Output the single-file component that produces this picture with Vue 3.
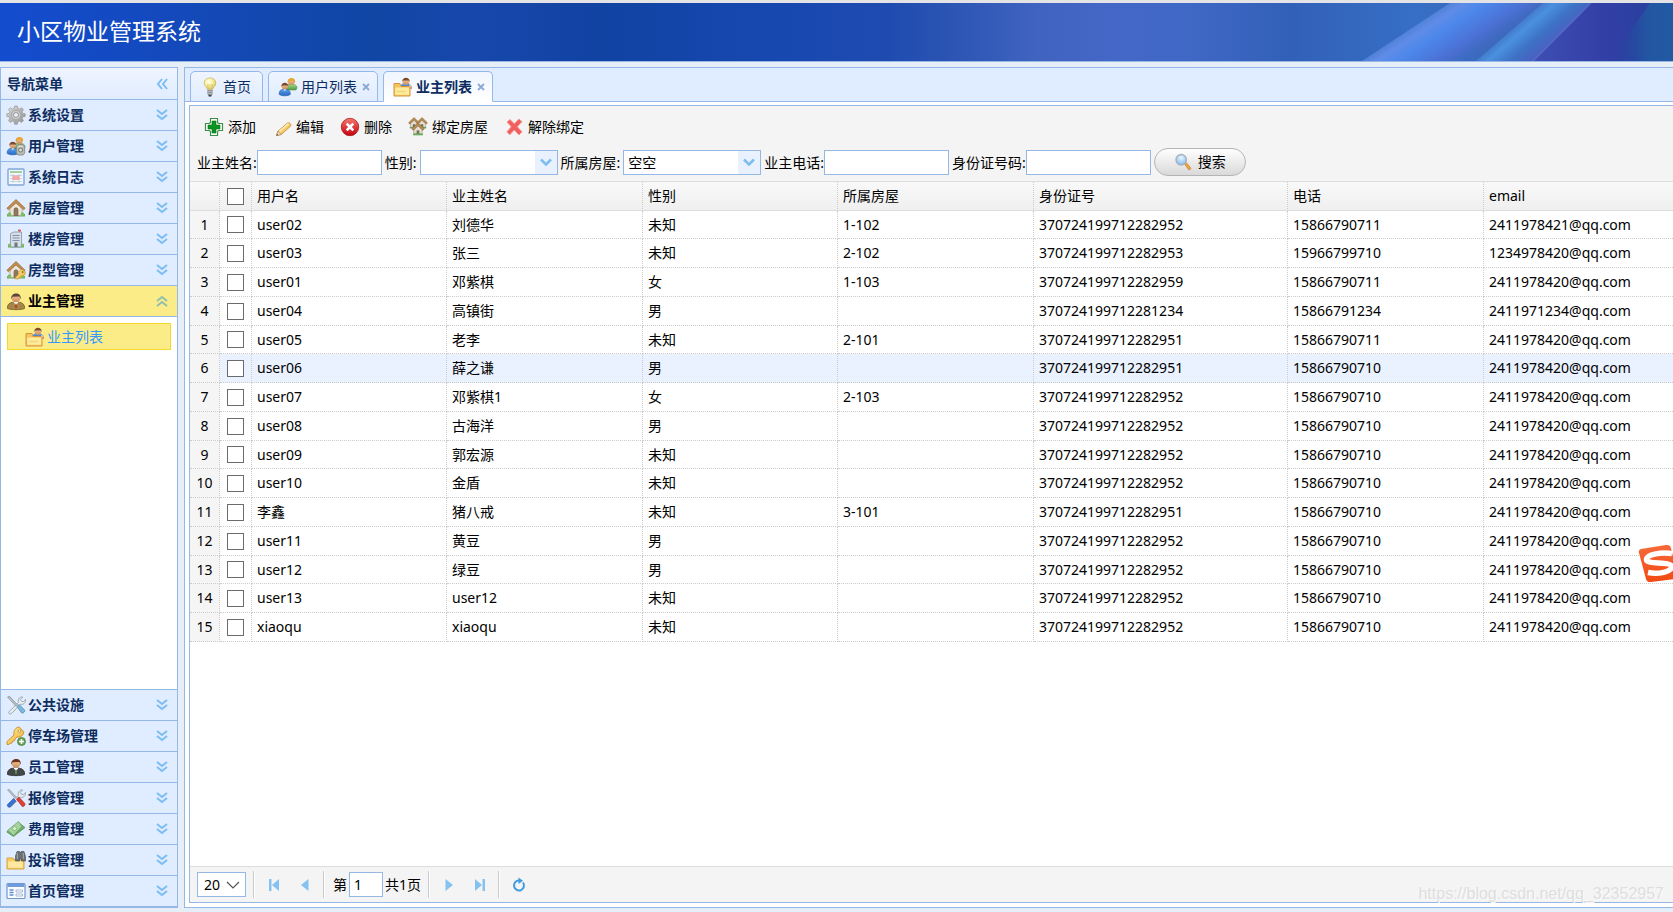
<script setup>
import { ref } from 'vue'

const topMenus = [
  { label: '系统设置', icon: 'gear' },
  { label: '用户管理', icon: 'users-gear' },
  { label: '系统日志', icon: 'log' },
  { label: '房屋管理', icon: 'house' },
  { label: '楼房管理', icon: 'building' },
  { label: '房型管理', icon: 'house-key' }
]
const bottomMenus = [
  { label: '公共设施', icon: 'tools' },
  { label: '停车场管理', icon: 'key' },
  { label: '员工管理', icon: 'staff' },
  { label: '报修管理', icon: 'repair' },
  { label: '费用管理', icon: 'money' },
  { label: '投诉管理', icon: 'folder-search' },
  { label: '首页管理', icon: 'page' }
]
const tabs = [
  { label: '首页', icon: 'bulb', closable: false },
  { label: '用户列表', icon: 'users', closable: true },
  { label: '业主列表', icon: 'folder-user', closable: true }
]
const activeTab = ref('业主列表')
const actions = [
  { label: '添加', icon: 'add' },
  { label: '编辑', icon: 'pencil' },
  { label: '删除', icon: 'delete' },
  { label: '绑定房屋', icon: 'houses' },
  { label: '解除绑定', icon: 'cross' }
]
const columns = ['用户名', '业主姓名', '性别', '所属房屋', '身份证号', '电话', 'email']
const rows = [
  ['user02', '刘德华', '未知', '1-102', '370724199712282952', '15866790711', '2411978421@qq.com'],
  ['user03', '张三', '未知', '2-102', '370724199712282953', '15966799710', '1234978420@qq.com'],
  ['user01', '邓紫棋', '女', '1-103', '370724199712282959', '15866790711', '2411978420@qq.com'],
  ['user04', '高镇街', '男', '', '370724199712281234', '15866791234', '2411971234@qq.com'],
  ['user05', '老李', '未知', '2-101', '370724199712282951', '15866790711', '2411978420@qq.com'],
  ['user06', '薛之谦', '男', '', '370724199712282951', '15866790710', '2411978420@qq.com'],
  ['user07', '邓紫棋1', '女', '2-103', '370724199712282952', '15866790710', '2411978420@qq.com'],
  ['user08', '古海洋', '男', '', '370724199712282952', '15866790710', '2411978420@qq.com'],
  ['user09', '郭宏源', '未知', '', '370724199712282952', '15866790710', '2411978420@qq.com'],
  ['user10', '金盾', '未知', '', '370724199712282952', '15866790710', '2411978420@qq.com'],
  ['李鑫', '猪八戒', '未知', '3-101', '370724199712282951', '15866790710', '2411978420@qq.com'],
  ['user11', '黄豆', '男', '', '370724199712282952', '15866790710', '2411978420@qq.com'],
  ['user12', '绿豆', '男', '', '370724199712282952', '15866790710', '2411978420@qq.com'],
  ['user13', 'user12', '未知', '', '370724199712282952', '15866790710', '2411978420@qq.com'],
  ['xiaoqu', 'xiaoqu', '未知', '', '370724199712282952', '15866790710', '2411978420@qq.com']
]
const name = ref('')
const sex = ref('')
const room = ref('空空')
const phone = ref('')
const idCard = ref('')
const pageSize = ref('20')
const page = ref('1')
</script>

<template>
  <div class="app">
    <svg class="sprite" aria-hidden="true">
      <defs>
        <linearGradient id="g-skin" x1="0" y1="0" x2="0" y2="1"><stop offset="0" stop-color="#f6cfa4" /><stop offset="1" stop-color="#cf8c5c" /></linearGradient>
        <linearGradient id="g-blue" x1="0" y1="0" x2="0" y2="1"><stop offset="0" stop-color="#5fa4ea" /><stop offset="1" stop-color="#2766c4" /></linearGradient>
        <linearGradient id="g-green" x1="0" y1="0" x2="0" y2="1"><stop offset="0" stop-color="#a7d98c" /><stop offset="1" stop-color="#4f9a42" /></linearGradient>
        <linearGradient id="g-gray" x1="0" y1="0" x2="1" y2="1"><stop offset="0" stop-color="#dedede" /><stop offset="1" stop-color="#8f8f8f" /></linearGradient>
        <linearGradient id="g-gold" x1="0" y1="0" x2="1" y2="1"><stop offset="0" stop-color="#fff0a0" /><stop offset="1" stop-color="#e8a92c" /></linearGradient>
        <linearGradient id="g-red" x1="0" y1="0" x2="0" y2="1"><stop offset="0" stop-color="#f47a70" /><stop offset="1" stop-color="#c60010" /></linearGradient>
        <radialGradient id="g-bulb" cx=".4" cy=".35" r=".7"><stop offset="0" stop-color="#fffff0" /><stop offset=".5" stop-color="#f8f0a0" /><stop offset="1" stop-color="#cdbd5a" /></radialGradient>
        <radialGradient id="g-lens" cx=".5" cy=".3" r=".7"><stop offset="0" stop-color="#e8f6ff" /><stop offset="1" stop-color="#83bdf2" /></radialGradient>
      </defs>

      <symbol id="i-gear" viewBox="0 0 20 20">
        <path d="M8.6 1h2.8l.4 2.4 1.7.7 2-1.4 2 2-1.4 2 .7 1.7 2.400.4v2.600l-2.400.5-.7 1.600 1.400 2.100-2 1.900-2-1.400-1.700.7-.4 2.400H8.600l-.4-2.400-1.700-.7-2 1.400-2-1.900 1.400-2.100-.7-1.600-2.400-.5V8.800l2.400-.4.7-1.700-1.400-2 2-2 2 1.400 1.700-.7z" fill="url(#g-gray)" stroke="#989898" stroke-width=".7" />
        <circle cx="10" cy="10" r="4.800" fill="#c9c9c9" stroke="#a5a5a5" />
        <circle cx="10" cy="10" r="2.400" fill="#eef4ff" stroke="#969696" />
      </symbol>

      <symbol id="i-user-back" viewBox="0 0 20 20">
        <path d="M8 11c0-3 2-4 5-4s6 1 6 4l-1 2H9z" fill="url(#g-green)" stroke="#5b9850" stroke-width=".6" />
        <circle cx="13.300" cy="4.600" r="3.400" fill="url(#g-skin)" />
        <path d="M9.600 5c-.6-5 7.800-5.600 7.600-.3l-.7 1.300c-.4-2-2-2.200-3.400-2.200S10.200 4.400 10.200 6z" fill="#e5a72d" />
      </symbol>
      <symbol id="i-user-front" viewBox="0 0 20 20">
        <path d="M1.200 17.500c-.4-4 2.300-5.500 5.500-5.500s6 1.500 5.600 5.500c-2 1.800-9 1.800-11.100 0z" fill="url(#g-blue)" stroke="#2a62b0" stroke-width=".6" />
        <path d="M5.500 12.300h2.600l-1.300 2z" fill="#fff" />
        <circle cx="6.800" cy="9.300" r="3.100" fill="url(#g-skin)" />
        <path d="M3.400 9.700c-.7-5 7.300-5.200 6.900-.1L9.500 8.400H4.700z" fill="#7b4b2c" />
      </symbol>
      <symbol id="i-users" viewBox="0 0 20 20">
        <use href="#i-user-back" /><use href="#i-user-front" />
      </symbol>
      <symbol id="i-users-gear" viewBox="0 0 20 20">
        <use href="#i-user-back" /><use href="#i-user-front" />
        <path d="M12 8.500h5l1.700 2V17l-1.700 2h-5l-1.500-2v-6.500z" fill="#b9bbb4" stroke="#85877f" stroke-width=".8" />
        <circle cx="14.600" cy="14" r="2" fill="#dcdcd6" stroke="#777a70" />
        <path d="M12.500 10.500h4" stroke="#e6e6e0" />
      </symbol>

      <symbol id="i-log" viewBox="0 0 20 20">
        <rect x="2" y="2" width="16" height="16" rx="1" fill="#f2f7fd" stroke="#7fa6d8" stroke-width="1.400" />
        <rect x="4" y="4" width="12" height="2" fill="#a5d0a0" />
        <path d="M4 8.500h12M4 11.500h12M4 14.500h12M7 7v9M13 7v9" stroke="#b7c9df" stroke-width=".8" />
        <path d="M6.500 8.500h7v4.500h-7z" fill="#f4a09a" opacity=".85" />
      </symbol>

      <symbol id="i-house" viewBox="0 0 20 20">
        <path d="M1 16h18v2.500H1z" fill="#6fb257" />
        <path d="M4 9l6-5.500L16 9v8.500H4z" fill="#ece6da" stroke="#a69a86" stroke-width=".7" />
        <path d="M10 1.500L.8 10.300l1.600 1.500L10 5l7.600 6.800 1.600-1.500z" fill="#c08d4c" stroke="#8d6231" stroke-width=".6" />
        <path d="M8 17.500V12c0-1.400.8-2.200 2-2.200s2 .8 2 2.200v5.500z" fill="#8f7a60" stroke="#6b5843" stroke-width=".6" />
        <circle cx="3.500" cy="16" r="1.800" fill="#7fc061" /><circle cx="16.500" cy="16" r="1.800" fill="#7fc061" />
      </symbol>
      <symbol id="i-house-key" viewBox="0 0 20 20">
        <use href="#i-house" />
        <path d="M8.500 18.500l4.200-4.600c-.6-2.300 1-4.200 3-4.200s3.600 1.400 3.600 3.300-2 3.500-4 3L12.500 19z" fill="url(#g-gold)" stroke="#c9952f" stroke-width=".7" />
        <circle cx="16.600" cy="12" r=".9" fill="#8f6a20" />
      </symbol>
      <symbol id="i-building" viewBox="0 0 20 20">
        <path d="M2 16h16v2.500H2z" fill="#6fb257" />
        <path d="M4.500 4.500L8 3h7.500v15h-11z" fill="#d8dee6" stroke="#8493a6" stroke-width=".8" />
        <path d="M6.500 6.500h7M6.500 9h7M6.500 11.500h7" stroke="#7c91ad" stroke-width="1" />
        <path d="M8.500 13.500h3V18h-3z" fill="#6c7885" />
        <path d="M13.500 3V.8" stroke="#999" /><path d="M12 .6h3v1.800h-3z" fill="#d95d5d" />
        <circle cx="3.400" cy="16" r="1.500" fill="#7fc061" /><circle cx="16.700" cy="16" r="1.500" fill="#7fc061" />
      </symbol>

      <symbol id="i-owner" viewBox="0 0 20 20">
        <path d="M1.500 17.500C1 13 4 11 10 11s9 2 8.500 6.500c-3 1.500-14 1.500-17 0z" fill="#a58746" stroke="#735b2a" stroke-width=".8" />
        <path d="M7.500 11l2.500 3 2.500-3z" fill="#fff" /><path d="M10 12l1.200 4L10 17.500 8.800 16z" fill="#b53b2c" />
        <circle cx="10" cy="7" r="4.300" fill="url(#g-skin)" />
        <path d="M5.300 8.200C4 1 16 .2 14.700 8.200l-1.200-2.600-7 .2z" fill="#59473a" />
      </symbol>
      <symbol id="i-staff" viewBox="0 0 20 20">
        <path d="M1.500 17.500C1 13 4 11 10 11s9 2 8.500 6.500c-3 1.500-14 1.500-17 0z" fill="#454748" stroke="#2b2c2e" stroke-width=".8" />
        <path d="M7.500 11l2.500 3 2.500-3z" fill="#fff" /><path d="M10 12l1.200 4L10 17.500 8.800 16z" fill="#4e9a54" />
        <circle cx="10" cy="6.500" r="4.300" fill="url(#g-skin)" />
        <path d="M5.300 7.700C4 .5 16-.3 14.700 7.700l-1.200-2.600-7 .2z" fill="#6a3420" />
      </symbol>

      <symbol id="i-folder-user" viewBox="0 0 20 20">
        <path d="M7.500 11c0-4 2-5 5-5s6 1.500 6.500 5l-1 1H8z" fill="url(#g-blue)" />
        <circle cx="13" cy="4.700" r="3.300" fill="url(#g-skin)" />
        <path d="M9.300 4.800c-.5-5.200 7.800-5.400 7.400-.1l-1-1.300-5.400.2z" fill="#7b4b2c" />
        <path d="M1 6.500h6l1 3h9V19H1z" fill="#f3c45b" stroke="#d8963a" />
        <path d="M2.200 10.500h14v7.300h-14z" fill="#fdeb9e" /><path d="M4 14.500h9" stroke="#f4d67a" stroke-width="1.500" />
        <path d="M16 8l2.800.8-.3 3-2 .5z" fill="url(#g-skin)" />
      </symbol>
      <symbol id="i-folder-search" viewBox="0 0 20 20">
        <path d="M1 8h6l1 1.800h10V19H1z" fill="#f6cd62" stroke="#d8a33c" />
        <path d="M2.200 11.500h14.500v6.300H2.200z" fill="#ffe9a0" />
        <path d="M9.500 6L11 1.500h2.500l.8 1.500.8-1.500H18l1.500 5V11h-4V9h-2v2h-4z" fill="#6a6e75" stroke="#45484e" stroke-width=".6" />
        <path d="M11.300 3v6M17.300 3v6" stroke="#a7abb3" />
      </symbol>

      <symbol id="i-wrench" viewBox="0 0 20 20">
        <path d="M3 16.800l9.400-9.500c-.8-3 1-5.700 4.300-5.300L14.300 4.500l1.200 1.800 2.100.4 1.900-2.300c.5 3.200-2 5.600-4.900 4.800L5.200 18.800c-1.600.8-3-.6-2.200-2z" fill="#e9edf0" stroke="#8f999f" stroke-width=".8" />
      </symbol>
      <symbol id="i-tools" viewBox="0 0 20 20">
        <use href="#i-wrench" />
        <path d="M1.500 2l2-.8 8 8.600-1.500 1.500z" fill="#b7bfc5" stroke="#7c878f" stroke-width=".6" />
        <path d="M11 11.500l2.200-2 5.300 5.500c1 1.300-1.500 4-3 2.800z" fill="#7db9dc" stroke="#4482a8" stroke-width=".7" />
      </symbol>
      <symbol id="i-repair" viewBox="0 0 20 20">
        <path d="M1.500 2l1.600-.8 8 8.600-1.300 1.300z" fill="#b7bfc5" stroke="#8c949a" stroke-width=".6" />
        <use href="#i-wrench" />
        <path d="M1.500 16.500l6-6 2.500 2.500-6 6c-1.500.8-3.300-1-2.500-2.500z" fill="#3672d6" stroke="#214f9e" stroke-width=".6" />
        <path d="M10.500 11l2.300-2 6 6.500c.8 1.500-1.200 3.600-2.700 2.800z" fill="#df4038" stroke="#a3221d" stroke-width=".7" />
      </symbol>

      <symbol id="i-key" viewBox="0 0 20 20">
        <path d="M1 18.500v-3L8 9c-.8-4.500 1.500-7.500 5.200-8l4.500 4.500c0 4-3 6-6.700 5.500l-2 1.800-.5 2-2 .3-.6 2-2 .2-.9 1.200z" fill="url(#g-gold)" stroke="#cf8a27" stroke-width=".9" />
        <circle cx="13.500" cy="5" r="1.300" fill="#fff" stroke="#bb7a20" stroke-width=".7" />
        <circle cx="15.500" cy="15.500" r="4" fill="#68a65a" stroke="#3b7a35" stroke-width=".7" />
        <path d="M15.500 13v5M13 15.500h5" stroke="#fff" stroke-width="1.500" />
      </symbol>
      <symbol id="i-money" viewBox="0 0 20 20">
        <path d="M.8 13L13 4l6 4.500-11.500 9z" fill="#70ae6a" stroke="#4d8a4a" stroke-width=".7" />
        <path d="M1.500 11.500L12.500 2.500l3.500 5-8.500 9z" fill="#a5d49c" stroke="#5d9a58" stroke-width=".7" />
        <circle cx="8.600" cy="9.600" r="2" fill="#d9f0d3" stroke="#69a562" stroke-width=".6" />
      </symbol>
      <symbol id="i-page" viewBox="0 0 20 20">
        <rect x="1" y="2.500" width="18" height="15" rx="1" fill="#fafcff" stroke="#7397cb" stroke-width="1.200" />
        <path d="M1.500 3h17v3h-17z" fill="#6f9cdd" />
        <path d="M3.500 9h4M3.500 11.500h4M3.500 14h4" stroke="#5d8fd8" stroke-width="1.300" />
        <path d="M10 9h6.500v2H10zM10 13h6.500v2H10z" fill="#fff" stroke="#95abc9" stroke-width=".8" />
      </symbol>

      <symbol id="i-bulb" viewBox="0 0 20 20">
        <path d="M7.500 12.500c0-2-3.300-3.300-3.300-6.600a5.800 5 0 0 1 11.600 0c0 3.300-3.300 4.600-3.300 6.600z" fill="url(#g-bulb)" stroke="#c5b45e" stroke-width=".7" />
        <path d="M8.500 12l-1-4.500 2.500 1 2.500-1-1 4.500" fill="none" stroke="#d3b64c" stroke-width=".6" />
        <path d="M7.300 13h5.400v4l-1.500 2.200H8.800L7.300 17z" fill="#8d9095" /><path d="M7.300 14.300h5.400M7.300 16.300h5.400" stroke="#c9ccd0" stroke-width=".8" />
        <path d="M8.700 18h2.600v1.500H8.700z" fill="#404246" />
      </symbol>
      <symbol id="i-add" viewBox="0 0 20 20">
        <path d="M6.500 1.500h7v4l1 1h4v7h-4l-1 1v4h-7v-4l-1-1h-4v-7h4l1-1z" fill="#fff" stroke="#3c8f46" stroke-width="1.200" />
        <path d="M8 4h4v4h4v4h-4v4H8v-4H4V8h4z" fill="#0b9420" stroke="#08731a" stroke-width=".6" />
      </symbol>
      <symbol id="i-pencil" viewBox="0 0 20 20">
        <path d="M4.500 18.500L6 14.200 15.500 6c1.500-1 4 1.200 3.200 3L9.300 17.500z" fill="#f6cb66" stroke="#bf8732" stroke-width=".8" />
        <path d="M7.500 14.500l9-8" stroke="#fff0b8" stroke-width="1.500" />
        <path d="M4.500 18.500L6 14.200l3.300 3.300z" fill="#f3dfc2" stroke="#9f7c50" stroke-width=".6" /><path d="M4.500 18.600l.6-1.700 1.200 1.200z" fill="#444" />
      </symbol>
      <symbol id="i-delete" viewBox="0 0 20 20">
        <circle cx="10" cy="10" r="8.700" fill="url(#g-red)" stroke="#a91c1c" stroke-width=".8" />
        <path d="M5.800 7.500l1.800-1.800L10 8l2.400-2.300 1.800 1.800L11.900 10l2.300 2.500-1.800 1.800L10 12l-2.400 2.300-1.800-1.800L8.100 10z" fill="#fff" />
      </symbol>
      <symbol id="i-cottage" viewBox="0 0 20 20">
        <path d="M4 9l6-6 6 6v8H4z" fill="#e4e0d4" stroke="#9a8d76" stroke-width=".8" />
        <path d="M10 1L1 9.500 3.200 12 10 5.500l6.800 6.500L19 9.500z" fill="#b88c52" stroke="#80602f" stroke-width=".8" />
        <path d="M8 17v-5h4v5z" fill="#77715f" /><path d="M3 16.500h14V19H3z" fill="#66a85a" />
      </symbol>
      <symbol id="i-houses" viewBox="0 0 20 20">
        <use href="#i-cottage" x="0" y="0" width="12" height="12" />
        <use href="#i-cottage" x="8" y="0" width="12" height="12" />
        <use href="#i-cottage" x="3" y="5" width="14" height="14" />
      </symbol>
      <symbol id="i-cross" viewBox="0 0 20 20">
        <path d="M3 5l3-2.500 4.300 4.300L14.800 2 18 4.600 13.300 9.800 18 14.800 15 18l-4.800-5-4.400 4.800L2.800 15l4.400-5.200z" fill="#f0605e" stroke="#f79a94" />
      </symbol>
      <symbol id="i-search" viewBox="0 0 20 20">
        <path d="M11.500 12l2-1.500 5 6c.6 1.300-1 2.700-2.200 2z" fill="#f0a63a" stroke="#b8782a" stroke-width=".7" />
        <circle cx="8" cy="7.500" r="5.800" fill="url(#g-lens)" stroke="#a7b1bd" stroke-width="1.500" />
      </symbol>
      <symbol id="i-double" viewBox="0 0 12 12">
        <path d="M1 1l5 4 5-4M1 6l5 4 5-4" fill="none" stroke="currentColor" stroke-width="2" />
      </symbol>
      <symbol id="i-down" viewBox="0 0 12 12">
        <path d="M1 3.500l5 5 5-5" fill="none" stroke="currentColor" stroke-width="2.500" />
      </symbol>
    </svg>

    <header class="banner">
      <svg class="rays" viewBox="0 0 573 58" preserveAspectRatio="none" aria-hidden="true">
        <defs>
          <linearGradient id="r-base"><stop offset="0" stop-color="#4467c7" /><stop offset=".15" stop-color="#4068c6" /><stop offset=".33" stop-color="#3260b8" /><stop offset=".55" stop-color="#366fc5" /><stop offset=".7" stop-color="#3a68b8" /><stop offset=".8" stop-color="#3868b4" /><stop offset="1" stop-color="#323fa4" /></linearGradient>
          <linearGradient id="r-one" x1="263" y1="58" x2="298" y2="111" gradientUnits="userSpaceOnUse"><stop offset="0" stop-color="#6590ea" stop-opacity=".6" /><stop offset=".12" stop-color="#5f8ce8" /><stop offset=".3" stop-color="#4c88ea" /><stop offset=".65" stop-color="#4b70d4" /><stop offset="1" stop-color="#4068c0" stop-opacity="0" /></linearGradient>
          <linearGradient id="r-two" x1="376" y1="58" x2="400" y2="86" gradientUnits="userSpaceOnUse"><stop offset="0" stop-color="#4b90e0" stop-opacity=".5" /><stop offset=".2" stop-color="#4b90e0" /><stop offset=".6" stop-color="#3d72c4" /><stop offset="1" stop-color="#4a5fc2" /></linearGradient>
          <linearGradient id="r-three"><stop offset="0" stop-color="#3f4fb4" /><stop offset=".5" stop-color="#333fa6" /><stop offset="1" stop-color="#26409c" /></linearGradient>
          <linearGradient id="r-four" x1="0" x2="1"><stop offset="0" stop-color="#243f9c" stop-opacity="0" /><stop offset=".6" stop-color="#2356a2" /><stop offset="1" stop-color="#215aa4" /></linearGradient>
        </defs>
        <path d="M0 0h573v58H0z" fill="url(#r-base)" />
        <path d="M262 58L350 0h116L378 58z" fill="url(#r-one)" />
        <path d="M376 58L443 0h48L433 58z" fill="url(#r-two)" />
        <path d="M433 58L491 0h82v58z" fill="url(#r-three)" />
        <path d="M433 58L491 0" stroke="#6277d0" stroke-opacity=".6" stroke-width="1.500" />
        <path d="M510 58L550 0h23v58z" fill="url(#r-four)" />
      </svg>
      <h1>小区物业管理系统</h1>
    </header>

    <div class="body">
      <nav class="sidebar" aria-label="导航菜单">
        <div class="nav-title">
          <span>导航菜单</span>
          <button type="button" class="collapse" aria-label="收起菜单">
            <svg class="chev left"><use href="#i-double" /></svg>
          </button>
        </div>
        <button v-for="m in topMenus" :key="m.label" type="button" class="menu">
          <svg class="icon"><use :href="'#i-' + m.icon" /></svg>
          <span>{{ m.label }}</span>
          <svg class="chev"><use href="#i-double" /></svg>
        </button>
        <button type="button" class="menu open" aria-expanded="true">
          <svg class="icon"><use href="#i-owner" /></svg>
          <span>业主管理</span>
          <svg class="chev up"><use href="#i-double" /></svg>
        </button>
        <div class="submenu">
          <a href="#owners"><svg class="icon"><use href="#i-folder-user" /></svg>业主列表</a>
        </div>
        <button v-for="m in bottomMenus" :key="m.label" type="button" class="menu">
          <svg class="icon"><use :href="'#i-' + m.icon" /></svg>
          <span>{{ m.label }}</span>
          <svg class="chev"><use href="#i-double" /></svg>
        </button>
      </nav>

      <main class="main">
        <div class="tabs">
          <div v-for="t in tabs" :key="t.label" class="tab" :class="{ active: t.label === activeTab, fixed: !t.closable }">
            <button type="button" class="tab-label" @click="activeTab = t.label">
              <svg class="icon"><use :href="'#i-' + t.icon" /></svg>{{ t.label }}
            </button>
            <button v-if="t.closable" type="button" class="tab-close" :aria-label="'关闭' + t.label">
              <svg viewBox="0 0 8 8"><path d="M1 1l6 6M7 1L1 7" stroke="currentColor" stroke-width="1.800" /></svg>
            </button>
          </div>
        </div>

        <div class="content">
          <section class="panel">
            <div class="toolbar">
              <div class="actions">
                <button v-for="a in actions" :key="a.label" type="button">
                  <svg class="icon"><use :href="'#i-' + a.icon" /></svg>{{ a.label }}
                </button>
              </div>
              <form class="filters" @submit.prevent>
                <div class="field"><label for="f-name">业主姓名:</label><input id="f-name" v-model="name" type="text"></div>
                <div class="field spaced">
                  <label for="f-sex">性别:</label>
                  <span class="combo">
                    <select id="f-sex" v-model="sex"><option value=""></option><option>男</option><option>女</option><option>未知</option></select>
                    <span class="arrow"><svg><use href="#i-down" /></svg></span>
                  </span>
                </div>
                <div class="field spaced">
                  <label for="f-room">所属房屋:</label>
                  <span class="combo">
                    <select id="f-room" v-model="room"><option>空空</option></select>
                    <span class="arrow"><svg><use href="#i-down" /></svg></span>
                  </span>
                </div>
                <div class="field"><label for="f-phone">业主电话:</label><input id="f-phone" v-model="phone" type="text"></div>
                <div class="field"><label for="f-id">身份证号码:</label><input id="f-id" v-model="idCard" type="text"></div>
                <button type="submit" class="search"><svg><use href="#i-search" /></svg>搜索</button>
              </form>
            </div>

            <div class="grid">
              <table>
                <colgroup>
                  <col class="c-num"><col class="c-check"><col class="c-narrow"><col class="c-std"><col class="c-narrow"><col class="c-std"><col class="c-id"><col class="c-std"><col>
                </colgroup>
                <thead>
                  <tr>
                    <th></th>
                    <th class="check"><input type="checkbox" aria-label="全选"></th>
                    <th v-for="c in columns" :key="c" scope="col">{{ c }}</th>
                  </tr>
                </thead>
                <tbody>
                  <tr v-for="(r, i) in rows" :key="i" :class="{ hover: i === 5 }">
                    <td class="num">{{ i + 1 }}</td>
                    <td class="check"><input type="checkbox" :aria-label="'选择 ' + r[0]"></td>
                    <td v-for="(v, j) in r" :key="j">{{ v }}</td>
                  </tr>
                </tbody>
              </table>
            </div>

            <div class="pager">
              <span class="size">
                <select v-model="pageSize" aria-label="每页条数"><option>10</option><option>20</option><option>50</option></select>
                <svg viewBox="0 0 14 14"><path d="M1 4l6 6 6-6" fill="none" stroke="#555" stroke-width="1.200" /></svg>
              </span>
              <i class="sep"></i>
              <button type="button" aria-label="第一页"><svg viewBox="0 0 12 12"><path d="M1 0h2.500v12H1zM11 0v12L4 6z" fill="#86c2f0" /></svg></button>
              <button type="button" aria-label="上一页"><svg viewBox="0 0 12 12"><path d="M9.500 0v12L2 6z" fill="#86c2f0" /></svg></button>
              <i class="sep"></i>
              <label class="page">第<input v-model="page" type="text">共1页</label>
              <i class="sep"></i>
              <button type="button" aria-label="下一页"><svg viewBox="0 0 12 12"><path d="M2.500 0v12L10 6z" fill="#86c2f0" /></svg></button>
              <button type="button" aria-label="最后一页"><svg viewBox="0 0 12 12"><path d="M11 0H8.500v12H11zM1 0v12l7-6z" fill="#86c2f0" /></svg></button>
              <i class="sep"></i>
              <button type="button" aria-label="刷新"><svg viewBox="0 0 12 12"><path d="M7 1.500H6A5 5 0 1 0 10 3.500" fill="none" stroke="#3f9be0" stroke-width="2" /><path d="M5.500 -1.500L10 1.800 5.500 5z" fill="#3f9be0" /></svg></button>
            </div>
          </section>
        </div>
        <svg class="ime" viewBox="0 0 40 40" aria-hidden="true">
          <defs><linearGradient id="ime-bg" x1="0" y1="0" x2="0" y2="1"><stop offset="0" stop-color="#f6693a" /><stop offset="1" stop-color="#f24a12" /></linearGradient></defs>
          <path d="M3 5L28 1q4-.6 5 3l6 26q.8 4-3 5L13 38q-4 .6-5-3L1 9Q0 6 3 5z" fill="url(#ime-bg)" />
          <path d="M34 9.500C24 8 9 10 8.500 15.500S33 17 33.500 22.500 20 30.500 10 28.500" fill="none" stroke="#fff" stroke-width="5.500" />
        </svg>
        <span class="watermark">https://blog.csdn.net/qq_32352957</span>
      </main>
    </div>
  </div>
</template>

<style>
body {
  overflow: hidden;
  background: #e6eef8;
}
</style>

<style scoped>
.app {
  display: flex;
  flex-direction: column;
  height: 100vh;
  box-sizing: border-box;
  padding-bottom: 4px;
  color: #000;
  font: 14px/20px "Noto Sans", "Noto Sans CJK SC", sans-serif;
}
.app *,
.app *::before {
  box-sizing: border-box;
}
.sprite {
  position: absolute;
  width: 0;
  height: 0;
}
button,
input,
select {
  margin: 0;
  padding: 0;
  border: 0;
  background: none;
  color: inherit;
  font: inherit;
}
.icon {
  flex: none;
  width: 20px;
  height: 20px;
}
.banner {
  position: relative;
  flex: none;
  display: flex;
  align-items: center;
  height: 62px;
  padding: 0 0 3px 17px;
  border-top: 3px solid #e4e4e6;
  border-bottom: 1px solid #95b8e7;
  background: linear-gradient(90deg, #134ccf 0, #1449b8 12%, #1046a4 22%, #1747ab 28%, #1143a3 36%, #1648b0 46%, #1f4bb0 53%, #2c55b4 57%, #4063c0 62%, #4467c7 66%);
}
.rays {
  position: absolute;
  top: 0;
  right: 0;
  width: 573px;
  height: 100%;
}
.banner h1 {
  margin: 0;
  color: #fff;
  font-size: 23px;
  font-weight: 400;
  line-height: 32px;
}
.body {
  flex: 1;
  display: flex;
  gap: 6px;
  min-height: 0;
  padding-top: 5px;
}
.sidebar {
  flex: none;
  display: flex;
  flex-direction: column;
  width: 178px;
  border: 1px solid #95b8e7;
  background: #fff;
  color: #0e2d5f;
  font-weight: 700;
}
.nav-title,
.menu {
  flex: none;
  display: flex;
  align-items: center;
  height: 31px;
  padding: 0 9px 0 6px;
  border-bottom: 1px solid #95b8e7;
}
.nav-title {
  height: 32px;
  justify-content: space-between;
  background: linear-gradient(#eff5ff, #e0ecff);
}
.menu {
  gap: 2px;
  padding-left: 5px;
  background: #e0ecff;
}
.menu span {
  flex: 1;
  text-align: left;
}
.menu.open {
  background: #fbec88;
  color: #000;
}
.collapse {
  display: flex;
}
.chev {
  width: 12px;
  height: 12px;
  color: #7cbdf2;
}
.chev.left {
  transform: rotate(90deg);
}
.chev.up {
  transform: rotate(180deg);
  color: #8fbfae;
}
.submenu {
  flex: 1;
  padding: 6px;
  border-bottom: 1px solid #95b8e7;
}
.submenu a {
  display: flex;
  align-items: center;
  gap: 2px;
  height: 27px;
  padding-left: 17px;
  border: 1px solid #f4d928;
  background: #fbec88;
  color: #3399ff;
  font-weight: 400;
  text-decoration: none;
}
.main {
  position: relative;
  flex: 1;
  display: flex;
  flex-direction: column;
  min-width: 0;
  overflow: hidden;
  border: 1px solid #95b8e7;
  border-right: 0;
  background: #fff;
}
.tabs {
  flex: none;
  display: flex;
  gap: 5px;
  padding: 3px 0 0 5px;
  border-bottom: 1px solid #95b8e7;
  background: #e0ecff;
}
.tab {
  display: flex;
  align-items: center;
  gap: 5px;
  height: 31px;
  margin-bottom: -1px;
  padding: 0 7px 0 9px;
  border: 1px solid #95b8e7;
  border-radius: 5px 5px 0 0;
  background: linear-gradient(#eff5ff, #e0ecff);
  color: #0e2d5f;
}
.tab.fixed {
  padding-right: 11px;
}
.tab.active {
  border-bottom-color: #fff;
  background: linear-gradient(#eff5ff, #fff);
  font-weight: 700;
}
.tab-label {
  display: flex;
  align-items: center;
  gap: 3px;
}
.tab-close {
  display: flex;
  color: #8aa9d6;
}
.tab-close svg {
  width: 8px;
  height: 8px;
}
.content {
  flex: 1;
  display: flex;
  min-height: 0;
  padding: 3px 0 4px 4px;
}
.panel {
  flex: 1;
  display: flex;
  flex-direction: column;
  min-width: 0;
  border: 1px solid #95b8e7;
  border-right: 0;
}
.toolbar {
  flex: none;
  padding: 11px 0 5px 7px;
  border-bottom: 1px solid #ddd;
  background: #f4f4f4;
}
.actions {
  display: flex;
  gap: 16px;
  padding-left: 7px;
}
.actions button {
  display: flex;
  align-items: center;
  gap: 4px;
}
.filters {
  display: flex;
  align-items: center;
  gap: 3px;
  margin-top: 11px;
}
.field {
  display: flex;
  align-items: center;
}
.field label {
  padding-top: 2px;
}
.spaced {
  gap: 3px;
}
.field input,
.combo {
  height: 25px;
  border: 1px solid #95b8e7;
  background: #fff;
}
.field input {
  width: 125px;
  padding: 0 4px;
}
.combo {
  position: relative;
  display: flex;
  width: 138px;
}
.combo select {
  width: 100%;
  padding: 2px 24px 0 4px;
  appearance: none;
}
.arrow {
  position: absolute;
  top: 0;
  right: 0;
  bottom: 0;
  display: flex;
  align-items: center;
  justify-content: center;
  width: 22px;
  background: #e8f1fd;
  color: #7cbdf2;
  pointer-events: none;
}
.arrow svg {
  width: 12px;
  height: 12px;
}
.search {
  display: flex;
  align-items: center;
  justify-content: center;
  gap: 6px;
  width: 92px;
  height: 28px;
  border: 1px solid #b4b4b4;
  border-radius: 14px;
  background: linear-gradient(#fff, #d9d9d9);
}
.search svg {
  width: 18px;
  height: 18px;
}
.grid {
  flex: 1;
  min-height: 0;
  overflow: hidden;
}
table {
  width: 100%;
  border-collapse: separate;
  border-spacing: 0;
  table-layout: fixed;
}
.c-num {
  width: 30px;
}
.c-check {
  width: 32px;
}
.c-narrow {
  width: 195px;
}
.c-std {
  width: 196px;
}
.c-id {
  width: 254px;
}
th,
td {
  height: 29px;
  padding: 0 5px;
  border-right: 1px dotted #ccc;
  border-bottom: 1px dotted #ccc;
  font-weight: 400;
  text-align: left;
  white-space: nowrap;
}
th:last-child,
td:last-child {
  border-right: 0;
}
th {
  border-bottom: 1px solid #ddd;
  background: linear-gradient(#f9f9f9, #efefef);
}
tbody tr:nth-child(4n + 1) td {
  height: 28px;
}
.num {
  padding: 0;
  background: #f5f5f5;
  text-align: center;
}
.check {
  padding: 0;
  text-align: center;
}
.check input {
  display: block;
  width: 17px;
  height: 17px;
  margin: 0 auto;
  border: 1px solid #6b6b6b;
  background: #fff;
  appearance: none;
}
.hover td:not(.num) {
  background: #eaf2ff;
}
.pager {
  flex: none;
  display: flex;
  align-items: center;
  height: 36px;
  padding-left: 7px;
  border-top: 1px solid #ddd;
  background: #f4f4f4;
}
.size {
  position: relative;
  display: flex;
  width: 49px;
  height: 25px;
  border: 1px solid #95b8e7;
  background: #fff;
}
.size select {
  width: 100%;
  padding-left: 6px;
  appearance: none;
}
.size svg {
  position: absolute;
  top: 5px;
  right: 5px;
  width: 14px;
  height: 14px;
  pointer-events: none;
}
.sep {
  width: 2px;
  height: 27px;
  margin: 0 3px 0 7px;
  border-right: 1px solid #fff;
  border-left: 1px solid #ccc;
}
.pager button {
  display: flex;
  align-items: center;
  justify-content: center;
  width: 31px;
  height: 25px;
}
.pager button + .sep {
  margin-left: 3px;
}
.pager button svg {
  width: 12px;
  height: 12px;
  overflow: visible;
}
.page {
  display: flex;
  align-items: center;
  gap: 2px;
  padding-left: 5px;
}
.page input {
  width: 34px;
  height: 25px;
  padding-left: 4px;
  border: 1px solid #95b8e7;
  background: #fff;
}
.ime {
  position: absolute;
  right: -5px;
  bottom: 323px;
  width: 40px;
  height: 40px;
}
.watermark {
  position: absolute;
  right: 9px;
  bottom: 2px;
  color: #dedede;
  font: 16px/22px "Liberation Sans", sans-serif;
  text-shadow: 1px 1px 0 #fbfbfb;
  pointer-events: none;
}
</style>
